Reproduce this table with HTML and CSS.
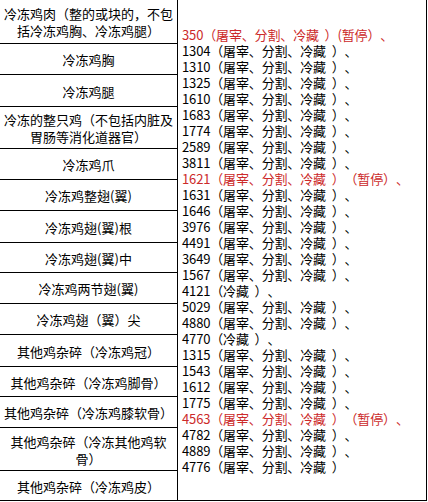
FILE: index.html
```html
<!DOCTYPE html>
<html lang="zh-CN">
<head>
<meta charset="utf-8">
<title>冷冻鸡产品</title>
<link rel="stylesheet" href="styles.css">
</head>
<body>
<div class="sheet">
  <div class="names">
    <div class="cell">冷冻鸡肉（整的或块的，不包<br>括冷冻鸡胸、冷冻鸡腿）</div>
    <div class="cell">冷冻鸡胸</div>
    <div class="cell">冷冻鸡腿</div>
    <div class="cell">冷冻的整只鸡（不包括内脏及<br>胃肠等消化道器官）</div>
    <div class="cell">冷冻鸡爪</div>
    <div class="cell">冷冻鸡整翅(翼)</div>
    <div class="cell">冷冻鸡翅(翼)根</div>
    <div class="cell">冷冻鸡翅(翼)中</div>
    <div class="cell">冷冻鸡两节翅(翼)</div>
    <div class="cell">冷冻鸡翅（翼）尖</div>
    <div class="cell">其他鸡杂碎（冷冻鸡冠）</div>
    <div class="cell">其他鸡杂碎（冷冻鸡脚骨）</div>
    <div class="cell">其他鸡杂碎（冷冻鸡膝软骨）</div>
    <div class="cell">其他鸡杂碎（冷冻其他鸡软<br>骨）</div>
    <div class="cell">其他鸡杂碎（冷冻鸡皮）</div>
  </div>
  <div class="plants">
    <div class="line red">350（屠宰、分割、冷藏 ）(暂停）、</div>
    <div class="line">1304（屠宰、分割、冷藏 ）、</div>
    <div class="line">1310（屠宰、分割、冷藏 ）、</div>
    <div class="line">1325（屠宰、分割、冷藏 ）、</div>
    <div class="line">1610（屠宰、分割、冷藏 ）、</div>
    <div class="line">1683（屠宰、分割、冷藏 ）、</div>
    <div class="line">1774（屠宰、分割、冷藏 ）、</div>
    <div class="line">2589（屠宰、分割、冷藏 ）、</div>
    <div class="line">3811（屠宰、分割、冷藏 ）、</div>
    <div class="line red">1621（屠宰、分割、冷藏 ）（暂停）、</div>
    <div class="line">1631（屠宰、分割、冷藏 ）、</div>
    <div class="line">1646（屠宰、分割、冷藏 ）、</div>
    <div class="line">3976（屠宰、分割、冷藏 ）、</div>
    <div class="line">4491（屠宰、分割、冷藏 ）、</div>
    <div class="line">3649（屠宰、分割、冷藏 ）、</div>
    <div class="line">1567（屠宰、分割、冷藏 ）、</div>
    <div class="line">4121（冷藏 ）、</div>
    <div class="line">5029（屠宰、分割、冷藏 ）、</div>
    <div class="line">4880（屠宰、分割、冷藏 ）、</div>
    <div class="line">4770（冷藏 ）、</div>
    <div class="line">1315（屠宰、分割、冷藏 ）、</div>
    <div class="line">1543（屠宰、分割、冷藏 ）、</div>
    <div class="line">1612（屠宰、分割、冷藏 ）、</div>
    <div class="line">1775（屠宰、分割、冷藏 ）、</div>
    <div class="line red">4563（屠宰、分割、冷藏 ）（暂停）、</div>
    <div class="line">4782（屠宰、分割、冷藏 ）、</div>
    <div class="line">4889（屠宰、分割、冷藏 ）、</div>
    <div class="line">4776（屠宰、分割、冷藏 ）</div>
  </div>
</div>
</body>
</html>
```
FILE: styles.css
```css
* {
  box-sizing: border-box;
}

html, body {
  margin: 0;
  padding: 0;
  background: #fff;
}

body {
  font-family: "Noto Sans CJK SC", "Noto Sans", sans-serif;
  font-size: 13px;
  color: #000;
  text-spacing-trim: space-all;
  font-feature-settings: "palt" 0, "halt" 0;
}

.sheet {
  display: flex;
  width: 427px;
  height: 501px;
}

.names {
  width: 177px;
  display: grid;
  grid-template-rows: 44px 31px 32px 42px 31px 31px 32px 30px 31px 31px 32px 30px 31px 43px 30px;
}

.cell {
  display: flex;
  align-items: center;
  justify-content: center;
  text-align: center;
  white-space: nowrap;
  line-height: 17px;
  padding: 1px 0 0;
  border-bottom: 1px solid #000;
}

.plants {
  width: 250px;
  display: flex;
  flex-direction: column;
  justify-content: center;
  padding: 2px 0 0 4px;
  border-left: 1px solid #000;
  border-right: 1px solid #000;
  border-bottom: 1px solid #000;
}

.line {
  line-height: 16px;
  height: 16px;
  white-space: pre;
  word-spacing: 3px;
  letter-spacing: -0.15px;
}

.red {
  color: #cc2a2a;
}
```
